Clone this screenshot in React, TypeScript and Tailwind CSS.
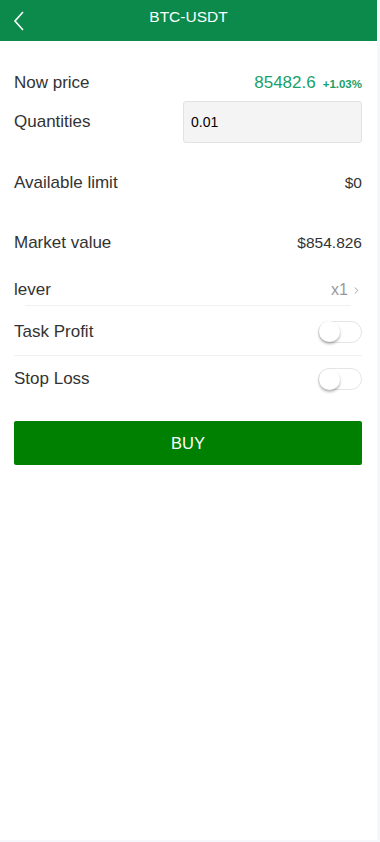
import { ChevronRight } from "lucide-react";

export default function App() {
  return (
    <div className="min-h-[842px] w-[380px] bg-[#f6f7fb] font-['Liberation_Sans',Arial,sans-serif]">
      <div className="flex min-h-[840px] w-[377px] flex-col bg-white">
        {/* Header */}
        <header className="relative flex h-[41px] items-start justify-center bg-[#0b8a4b] pt-[8px]">
          <button className="absolute left-[13px] top-[11px] text-white">
            <svg width="12" height="20" viewBox="0 0 12 20" fill="none">
              <path d="M10 1 L2 10 L10 19" stroke="white" strokeWidth="1.6" />
            </svg>
          </button>
          <h1 className="text-[15.5px] leading-[18px] text-white">BTC-USDT</h1>
        </header>

        <div className="flex flex-col pl-[14px] pr-[15px] pt-[31px] text-[#333]">
          {/* Now price */}
          <div className="flex h-[22px] items-center justify-between">
            <span className="text-[17px]">Now price</span>
            <span className="flex items-baseline gap-[7px] text-[#19a06a]">
              <span className="text-[17px]">85482.6</span>
              <span className="text-[11.5px] font-bold">+1.03%</span>
            </span>
          </div>

          {/* Quantities */}
          <div className="mt-[7px] flex h-[42px] items-center justify-between">
            <span className="text-[17px]">Quantities</span>
            <input
              defaultValue="0.01"
              className="h-[42px] w-[179px] rounded-[3px] border border-[#e2e2e2] bg-[#f4f4f4] px-[7px] text-[14px] text-black outline-none"
            />
          </div>

          {/* Available limit */}
          <div className="mt-[29px] flex h-[22px] items-center justify-between">
            <span className="text-[17px]">Available limit</span>
            <span className="text-[15.5px]">$0</span>
          </div>

          {/* Market value */}
          <div className="mt-[38px] flex h-[22px] items-center justify-between">
            <span className="text-[17px]">Market value</span>
            <span className="text-[15.5px]">$854.826</span>
          </div>

          {/* lever */}
          <div className="mt-[25px] flex h-[22px] items-center justify-between">
            <span className="text-[17px]">lever</span>
            <span className="flex items-center gap-[3px] text-[16px] text-[#999]">
              x1
              <ChevronRight size={11} strokeWidth={2} />
            </span>
          </div>
          <div className="mx-[11px] mt-[4px] h-px bg-[#f0f0f0]" />

          {/* Task Profit */}
          <div className="flex h-[49px] items-center justify-between pt-[2px]">
            <span className="text-[17px]">Task Profit</span>
            <Toggle />
          </div>
          <div className="h-px bg-[#f0f0f0]" />

          {/* Stop Loss */}
          <div className="flex h-[46px] items-center justify-between">
            <span className="text-[17px]">Stop Loss</span>
            <Toggle />
          </div>

          {/* BUY */}
          <button className="mt-[19px] h-[44px] w-full rounded-[2px] bg-[#008000] text-[16.5px] text-white">
            BUY
          </button>
        </div>
      </div>
    </div>
  );
}

function Toggle() {
  return (
    <div className="flex h-[22px] w-[44px] items-center rounded-full border border-[#e5e5e5] bg-white">
      <div className="h-[21px] w-[21px] rounded-full bg-white shadow-[0_2px_3px_rgba(0,0,0,0.3)]" />
    </div>
  );
}
